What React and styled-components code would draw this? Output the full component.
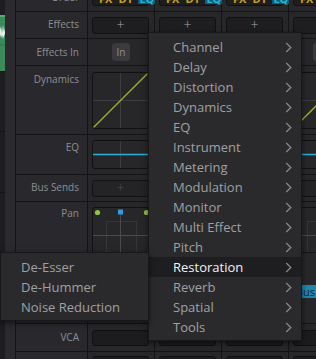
import React from 'react'
import styled, { createGlobalStyle } from 'styled-components'

const GlobalStyle = createGlobalStyle`
    html, body {
        margin: 0;
        padding: 0;
        background: #27272a;
    }

    body {
        font-family: "Open Sans", "Noto Sans", sans-serif;
        overflow: hidden;
    }

    * {
        box-sizing: border-box;
    }
`

const Screen = styled.div`
    position: relative;
    display: flex;
    width: 316px;
    height: 359px;
    overflow: hidden;
    background: #27272a;
`

// track lane on the far left
const Track = styled.div`
    display: flex;
    flex: none;
    width: 16px;
    border-right: 1px solid #151517;
`

const Lane = styled.div`
    display: flex;
    flex-direction: column;
    width: 5px;
    background: #1d1d1f;
`

const LaneBlock = styled.div`
    flex: none;
    height: ${p => p.$h}px;
    border-bottom: ${p => (p.$line ? '1px solid #141416' : 'none')};
`

const Clip = styled.div`
    flex: none;
    height: 57px;
    background: #3b8a5b;
    border-top: 2px solid #5aa978;
    border-bottom: 1px solid #141416;
    overflow: hidden;
`

const Gutter = styled.div`
    flex: 1;
    background: #2b2b2f;
`

// label column
const Labels = styled.div`
    display: flex;
    flex-direction: column;
    flex: none;
    width: 72px;
    background: #29292d;
    border-right: 1px solid #141416;
`

const Cell = styled.div`
    display: flex;
    flex: none;
    height: ${p => p.$h + 1}px;
    border-bottom: 1px solid #141416;
    overflow: visible;
`

const LabelCell = styled(Cell)`
    justify-content: flex-end;
    align-items: ${p => (p.$bottom ? 'flex-end' : 'flex-start')};
    padding-top: ${p => p.$top}px;
    padding-right: 8px;
`

const Label = styled.div`
    font-size: 10px;
    line-height: 14px;
    color: #8d8e93;
    white-space: nowrap;
    margin-bottom: ${p => (p.$cut ? 7 : 0)}px;
`

// channel strips
const Strips = styled.div`
    display: flex;
    flex: none;
`

const Strip = styled.div`
    display: flex;
    flex-direction: column;
    flex: none;
    width: 67px;
    background: #27272a;
    border-right: 1px solid #141416;
`

const StripCell = styled(Cell)`
    align-items: ${p => p.$align || 'center'};
    justify-content: ${p => p.$justify || 'flex-start'};
    padding: ${p => p.$pad || '0'} 5px 0 4px;
`

const OrderBox = styled.div`
    display: flex;
    align-items: flex-end;
    gap: 4px;
    width: 57px;
    height: 16px;
    margin-bottom: 5px;
    padding: 0 0 1px 5px;
    background: #1e1e21;
    border: 1px solid #111113;
    border-radius: 3px;
    font-size: 11px;
    font-weight: 700;
    line-height: 11px;
`

const OrderTag = styled.span`
    color: ${p => (p.$cyan ? '#22b6d6' : '#c9a224')};
    background: ${p => (p.$cyan ? '#0d5e74' : 'transparent')};
    padding: 0 1px;
`

const SlotButton = styled.div`
    display: flex;
    align-items: center;
    justify-content: center;
    width: 57px;
    height: 17px;
    background: ${p => (p.$dim ? '#242427' : '#1e1e21')};
    border: 1px solid #111113;
    border-radius: 3px;
    color: ${p => (p.$dim ? '#4c4c50' : '#a4a4a7')};
    font-size: 14px;
    font-weight: 300;
    line-height: 1;
`

const InButton = styled.div`
    display: flex;
    align-items: center;
    justify-content: center;
    width: 18px;
    height: 18px;
    margin-left: 20px;
    background: #3a3a3e;
    border-radius: 3px;
    color: #8f8f93;
    font-size: 10px;
    line-height: 1;
`

const GraphBox = styled.div`
    width: 57px;
    height: ${p => p.$h}px;
    background: #27272a;
    border: 1px solid #111113;
    border-radius: ${p => (p.$open ? '3px 3px 0 0' : '3px')};
    border-bottom-width: ${p => (p.$open ? 0 : 1)}px;
    overflow: hidden;
`

const BusTag = styled.div`
    margin-top: 32px;
    padding: 0 3px;
    height: 13px;
    background: #2285ab;
    color: #0f2c3a;
    font-size: 11px;
    line-height: 13px;
    border-radius: 2px;
`

const VcaButton = styled.div`
    width: 57px;
    height: 16px;
    background: #1c1c1f;
    border: 1px solid #101012;
    border-radius: 3px;
`

// context menus
const Menu = styled.div`
    position: absolute;
    top: ${p => p.$top}px;
    left: ${p => p.$left}px;
    width: ${p => p.$w}px;
    padding: 4px 0 3px;
    background: #2a2a2d;
    border: 1px solid #18181a;
    box-shadow: 0 2px 6px rgba(0, 0, 0, 0.55);
    z-index: 2;
`

const Item = styled.div`
    display: flex;
    align-items: center;
    justify-content: space-between;
    height: 20px;
    padding: 0 9px 0 ${p => p.$indent}px;
    background: ${p => (p.$active ? '#1e1e20' : 'transparent')};
    color: ${p => (p.$active ? '#f2f2f2' : '#a0a0a3')};
    font-size: 13px;
    line-height: 20px;
    white-space: nowrap;
`

const rows = [
    { key: 'order', label: 'Order', h: 11 },
    { key: 'effects', label: 'Effects', h: 26, top: 5 },
    { key: 'in', label: 'Effects In', h: 26, top: 6 },
    { key: 'dyn', label: 'Dynamics', h: 68, top: 6 },
    { key: 'eq', label: 'EQ', h: 39, top: 5 },
    { key: 'bus', label: 'Bus Sends', h: 26, top: 5 },
    { key: 'pan', label: 'Pan', h: 50, top: 4 },
    { key: 'out', label: '', h: 70, top: 0 },
    { key: 'vca', label: 'VCA', h: 27, top: 6 },
    { key: 'next', label: '', h: 30, top: 0 }
]

const categories = [
    'Channel', 'Delay', 'Distortion', 'Dynamics', 'EQ', 'Instrument', 'Metering',
    'Modulation', 'Monitor', 'Multi Effect', 'Pitch', 'Restoration', 'Reverb',
    'Spatial', 'Tools'
]

const restoration = ['De-Esser', 'De-Hummer', 'Noise Reduction']

const Chevron = () => (
    <svg width="7" height="11" viewBox="0 0 7 11">
        <polyline points="1.2,1 5.8,5.5 1.2,10" fill="none" stroke="#88888c" strokeWidth="1.3" />
    </svg>
)

const Waveform = () => (
    <svg width="5" height="54" viewBox="0 0 5 54">
        <path d="M0 13 L1 9 L2 16 L3 8 L4 15 L5 11 L5 17 L4 19 L3 22 L2 18 L1 21 L0 17 Z" fill="#e4efe7" />
        <line x1="0" y1="28" x2="5" y2="28" stroke="#2f7049" strokeWidth="1" />
    </svg>
)

const DynamicsGraph = () => (
    <svg width="55" height="55" viewBox="0 0 55 55">
        <line x1="27.5" y1="0" x2="27.5" y2="55" stroke="#3c3c40" />
        <line x1="0" y1="27.5" x2="55" y2="27.5" stroke="#3c3c40" />
        <line x1="0" y1="55" x2="55" y2="0" stroke="#9ab52a" strokeWidth="1.3" />
    </svg>
)

const EqGraph = () => (
    <svg width="55" height="27" viewBox="0 0 55 27">
        <line x1="27.5" y1="0" x2="27.5" y2="27" stroke="#3c3c40" />
        <line x1="0" y1="13.5" x2="55" y2="13.5" stroke="#25b2d4" strokeWidth="1.3" />
    </svg>
)

const PanGraph = () => (
    <svg width="55" height="45" viewBox="0 0 55 45">
        <rect x="13.5" y="13.5" width="30" height="31" fill="none" stroke="#36363a" />
        <line x1="27.5" y1="7" x2="27.5" y2="45" stroke="#4a4a4e" />
        <line x1="0" y1="27.5" x2="55" y2="27.5" stroke="#4a4a4e" />
        <circle cx="4.5" cy="4.5" r="2.6" fill="#8fc440" />
        <circle cx="53.5" cy="4.5" r="2.6" fill="#8fc440" />
        <rect x="25" y="1.5" width="5" height="5" fill="#2e9fdc" />
    </svg>
)

const StripRow = ({ row }) => {
    switch (row.key) {
        case 'order':
            return (
                <StripCell $h={row.h} $align="flex-end">
                    <OrderBox>
                        <OrderTag>FX</OrderTag>
                        <OrderTag>DY</OrderTag>
                        <OrderTag $cyan>EQ</OrderTag>
                    </OrderBox>
                </StripCell>
            )
        case 'effects':
            return (
                <StripCell $h={row.h}>
                    <SlotButton>+</SlotButton>
                </StripCell>
            )
        case 'in':
            return (
                <StripCell $h={row.h}>
                    <InButton>In</InButton>
                </StripCell>
            )
        case 'dyn':
            return (
                <StripCell $h={row.h} $align="flex-start" $pad="6px">
                    <GraphBox $h={57}>
                        <DynamicsGraph />
                    </GraphBox>
                </StripCell>
            )
        case 'eq':
            return (
                <StripCell $h={row.h} $align="flex-start" $pad="5px">
                    <GraphBox $h={29}>
                        <EqGraph />
                    </GraphBox>
                </StripCell>
            )
        case 'bus':
            return (
                <StripCell $h={row.h}>
                    <SlotButton $dim>+</SlotButton>
                </StripCell>
            )
        case 'pan':
            return (
                <StripCell $h={row.h} $align="flex-start" $pad="5px">
                    <GraphBox $h={45} $open>
                        <PanGraph />
                    </GraphBox>
                </StripCell>
            )
        case 'out':
            return (
                <StripCell $h={row.h} $align="flex-start">
                    <BusTag>Bus 1</BusTag>
                </StripCell>
            )
        case 'vca':
            return (
                <StripCell $h={row.h}>
                    <VcaButton />
                </StripCell>
            )
        default:
            return (
                <StripCell $h={row.h} $align="flex-start" $pad="4px">
                    <VcaButton />
                </StripCell>
            )
    }
}

export default function App() {
    return (
        <>
            <GlobalStyle />
            <Screen>
                <Track>
                    <Lane>
                        <LaneBlock $h={15} />
                        <Clip>
                            <Waveform />
                        </Clip>
                        <LaneBlock $h={60} $line />
                        <LaneBlock $h={61} $line />
                    </Lane>
                    <Gutter />
                </Track>

                <Labels>
                    {rows.map(row => (
                        <LabelCell
                            key={row.key}
                            $h={row.h}
                            $top={row.top || 0}
                            $bottom={row.key === 'order'}
                        >
                            <Label $cut={row.key === 'order'}>{row.label}</Label>
                        </LabelCell>
                    ))}
                </Labels>

                <Strips>
                    {[0, 1, 2, 3].map(i => (
                        <Strip key={i}>
                            {rows.map(row => (
                                <StripRow key={row.key} row={row} />
                            ))}
                        </Strip>
                    ))}
                </Strips>

                <Menu $top={32} $left={148} $w={154}>
                    {categories.map(name => (
                        <Item key={name} $indent={24} $active={name === 'Restoration'}>
                            {name}
                            <Chevron />
                        </Item>
                    ))}
                </Menu>

                <Menu $top={252} $left={0} $w={149}>
                    {restoration.map(name => (
                        <Item key={name} $indent={20}>
                            {name}
                        </Item>
                    ))}
                </Menu>
            </Screen>
        </>
    )
}
